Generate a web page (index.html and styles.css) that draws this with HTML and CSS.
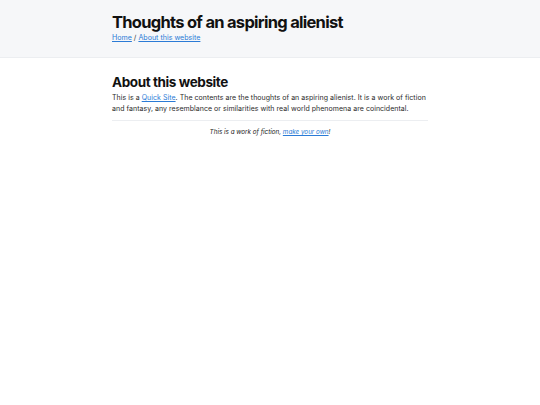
FILE: index.html
```html
<!DOCTYPE html>
<html lang="en">
<head>
<meta charset="utf-8">
<title>About this website</title>
<link rel="stylesheet" href="styles.css">
</head>
<body>
<header class="site-header">
  <div class="container">
    <h1 class="site-title">Thoughts of an aspiring alienist</h1>
    <nav class="crumbs"><a href="#">Home</a> / <a href="#">About this website</a></nav>
  </div>
</header>
<main class="container content">
  <h2 class="page-title">About this website</h2>
  <p class="body-text">This is a <a href="#">Quick Site</a>. The contents are the thoughts of an aspiring alienist. It is a work of fiction and fantasy, any resemblance or similarities with real world phenomena are coincidental.</p>
  <footer class="site-footer">This is a work of fiction, <a href="#">make your own</a>!</footer>
</main>
</body>
</html>
```

FILE: styles.css
```css
html, body {
  margin: 0;
  padding: 0;
  background: #ffffff;
  font-family: Inter, "Liberation Sans", sans-serif;
  color: #111111;
}
a {
  color: #2b7bd6;
}
.container {
  width: 316px;
  margin: 0 auto;
}
.site-header {
  background: #f6f7f9;
  border-bottom: 1px solid #eceef1;
  padding: 11px 0 14px;
}
.site-title {
  margin: 0;
  font-size: 16.5px;
  font-weight: 700;
  line-height: 22px;
  letter-spacing: -0.72px;
}
.crumbs {
  margin-top: 0;
  font-size: 7.1px;
  line-height: 10px;
  color: #333;
}
.content {
  padding-top: 15px;
}
.page-title {
  margin: 0;
  font-size: 13.5px;
  font-weight: 700;
  line-height: 18px;
  letter-spacing: -0.4px;
}
.body-text {
  margin: 1px 0 0;
  font-size: 7px;
  line-height: 11px;
  letter-spacing: 0.04px;
  color: #2a2a2a;
  padding-bottom: 6px;
  border-bottom: 1px solid #eceef1;
}
.site-footer {
  text-align: center;
  font-style: italic;
  font-size: 6.3px;
  line-height: 10px;
  padding-top: 6px;
  color: #222;
}
```
